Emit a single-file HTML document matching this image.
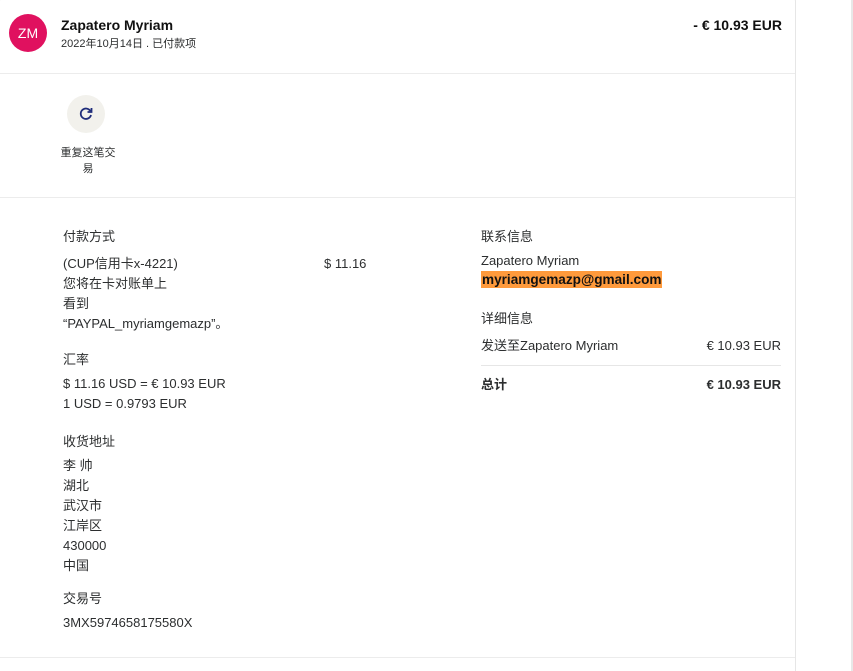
<!DOCTYPE html>
<html style="width:853px;height:671px;overflow:hidden"><head><meta charset="utf-8"><style>
body{margin:0;width:853px;height:671px;background:#fff;font-family:"Liberation Sans","Noto Sans CJK SC",sans-serif;color:#2c2e2f;overflow:hidden;position:relative}
.card{position:absolute;left:-1px;top:-10px;width:795px;height:700px;border:1px solid #e6e6e6;border-radius:12px;background:#fff}
.r{position:absolute;right:0;top:0;width:2px;height:671px;background:#e8e8e8}
.t{position:absolute;font-size:13px;white-space:nowrap;line-height:20px}
.h{position:absolute;left:0;width:795px;height:1px;background:#ececec}
</style></head><body>
<div class="card"></div>
<div class="r"></div>
<div style="position:absolute;left:9px;top:14px;width:38px;height:38px;border-radius:50%;background:#e0115f;color:#fff;font-size:14px;text-align:center;line-height:38px">ZM</div>
<div class="t" style="left:61px;top:15px;font-size:14px;font-weight:bold;color:#111">Zapatero Myriam</div>
<div class="t" style="left:61px;top:34px;font-size:11px">2022年10月14日 . 已付款项</div>
<div class="t" style="right:71px;top:15px;font-size:14px;font-weight:bold;color:#111">- € 10.93 EUR</div>
<div class="h" style="top:73px"></div>
<div style="position:absolute;left:67px;top:95px;width:38px;height:38px;border-radius:50%;background:#f2f1ec"></div>
<svg style="position:absolute;left:77px;top:105px" width="18" height="18" viewBox="0 0 18 18"><path d="M13.5 6.2A5.2 5.2 0 1 0 14 10" fill="none" stroke="#1f2d7a" stroke-width="1.8"/><path d="M14.5 3v4h-4" fill="none" stroke="#1f2d7a" stroke-width="1.8"/></svg>
<div class="t" style="left:59px;top:145px;font-size:11px;line-height:16px;text-align:center;width:58px;white-space:normal">重复这笔交易</div>
<div class="h" style="top:197px"></div>
<div class="t" style="left:63px;top:227px">付款方式</div>
<div class="t" style="left:63px;top:254px">(CUP信用卡x-4221)<br>您将在卡对账单上<br>看到<br>“PAYPAL_myriamgemazp”。</div>
<div class="t" style="left:324px;top:254px">$ 11.16</div>
<div class="t" style="left:63px;top:350px">汇率</div>
<div class="t" style="left:63px;top:374px">$ 11.16 USD = € 10.93 EUR<br>1 USD = 0.9793 EUR</div>
<div class="t" style="left:63px;top:432px">收货地址</div>
<div class="t" style="left:63px;top:456px">李 帅<br>湖北<br>武汉市<br>江岸区<br>430000<br>中国</div>
<div class="t" style="left:63px;top:589px">交易号</div>
<div class="t" style="left:63px;top:613px">3MX5974658175580X</div>
<div class="t" style="left:481px;top:227px">联系信息</div>
<div class="t" style="left:481px;top:251px">Zapatero Myriam</div>
<div class="t" style="left:481px;top:271px;background:#ff9a3c;font-weight:bold;color:#111;line-height:17px;font-size:13.6px;padding:0 1px">myriamgemazp@gmail.com</div>
<div class="t" style="left:481px;top:309px">详细信息</div>
<div class="t" style="left:481px;top:336px">发送至Zapatero Myriam</div>
<div class="t" style="right:72px;top:336px">€ 10.93 EUR</div>
<div style="position:absolute;left:481px;top:365px;width:300px;height:1px;background:#e6e6e6"></div>
<div class="t" style="left:481px;top:375px;font-weight:bold">总计</div>
<div class="t" style="right:72px;top:375px;font-weight:bold">€ 10.93 EUR</div>
<div class="h" style="top:657px"></div>
</body></html>
